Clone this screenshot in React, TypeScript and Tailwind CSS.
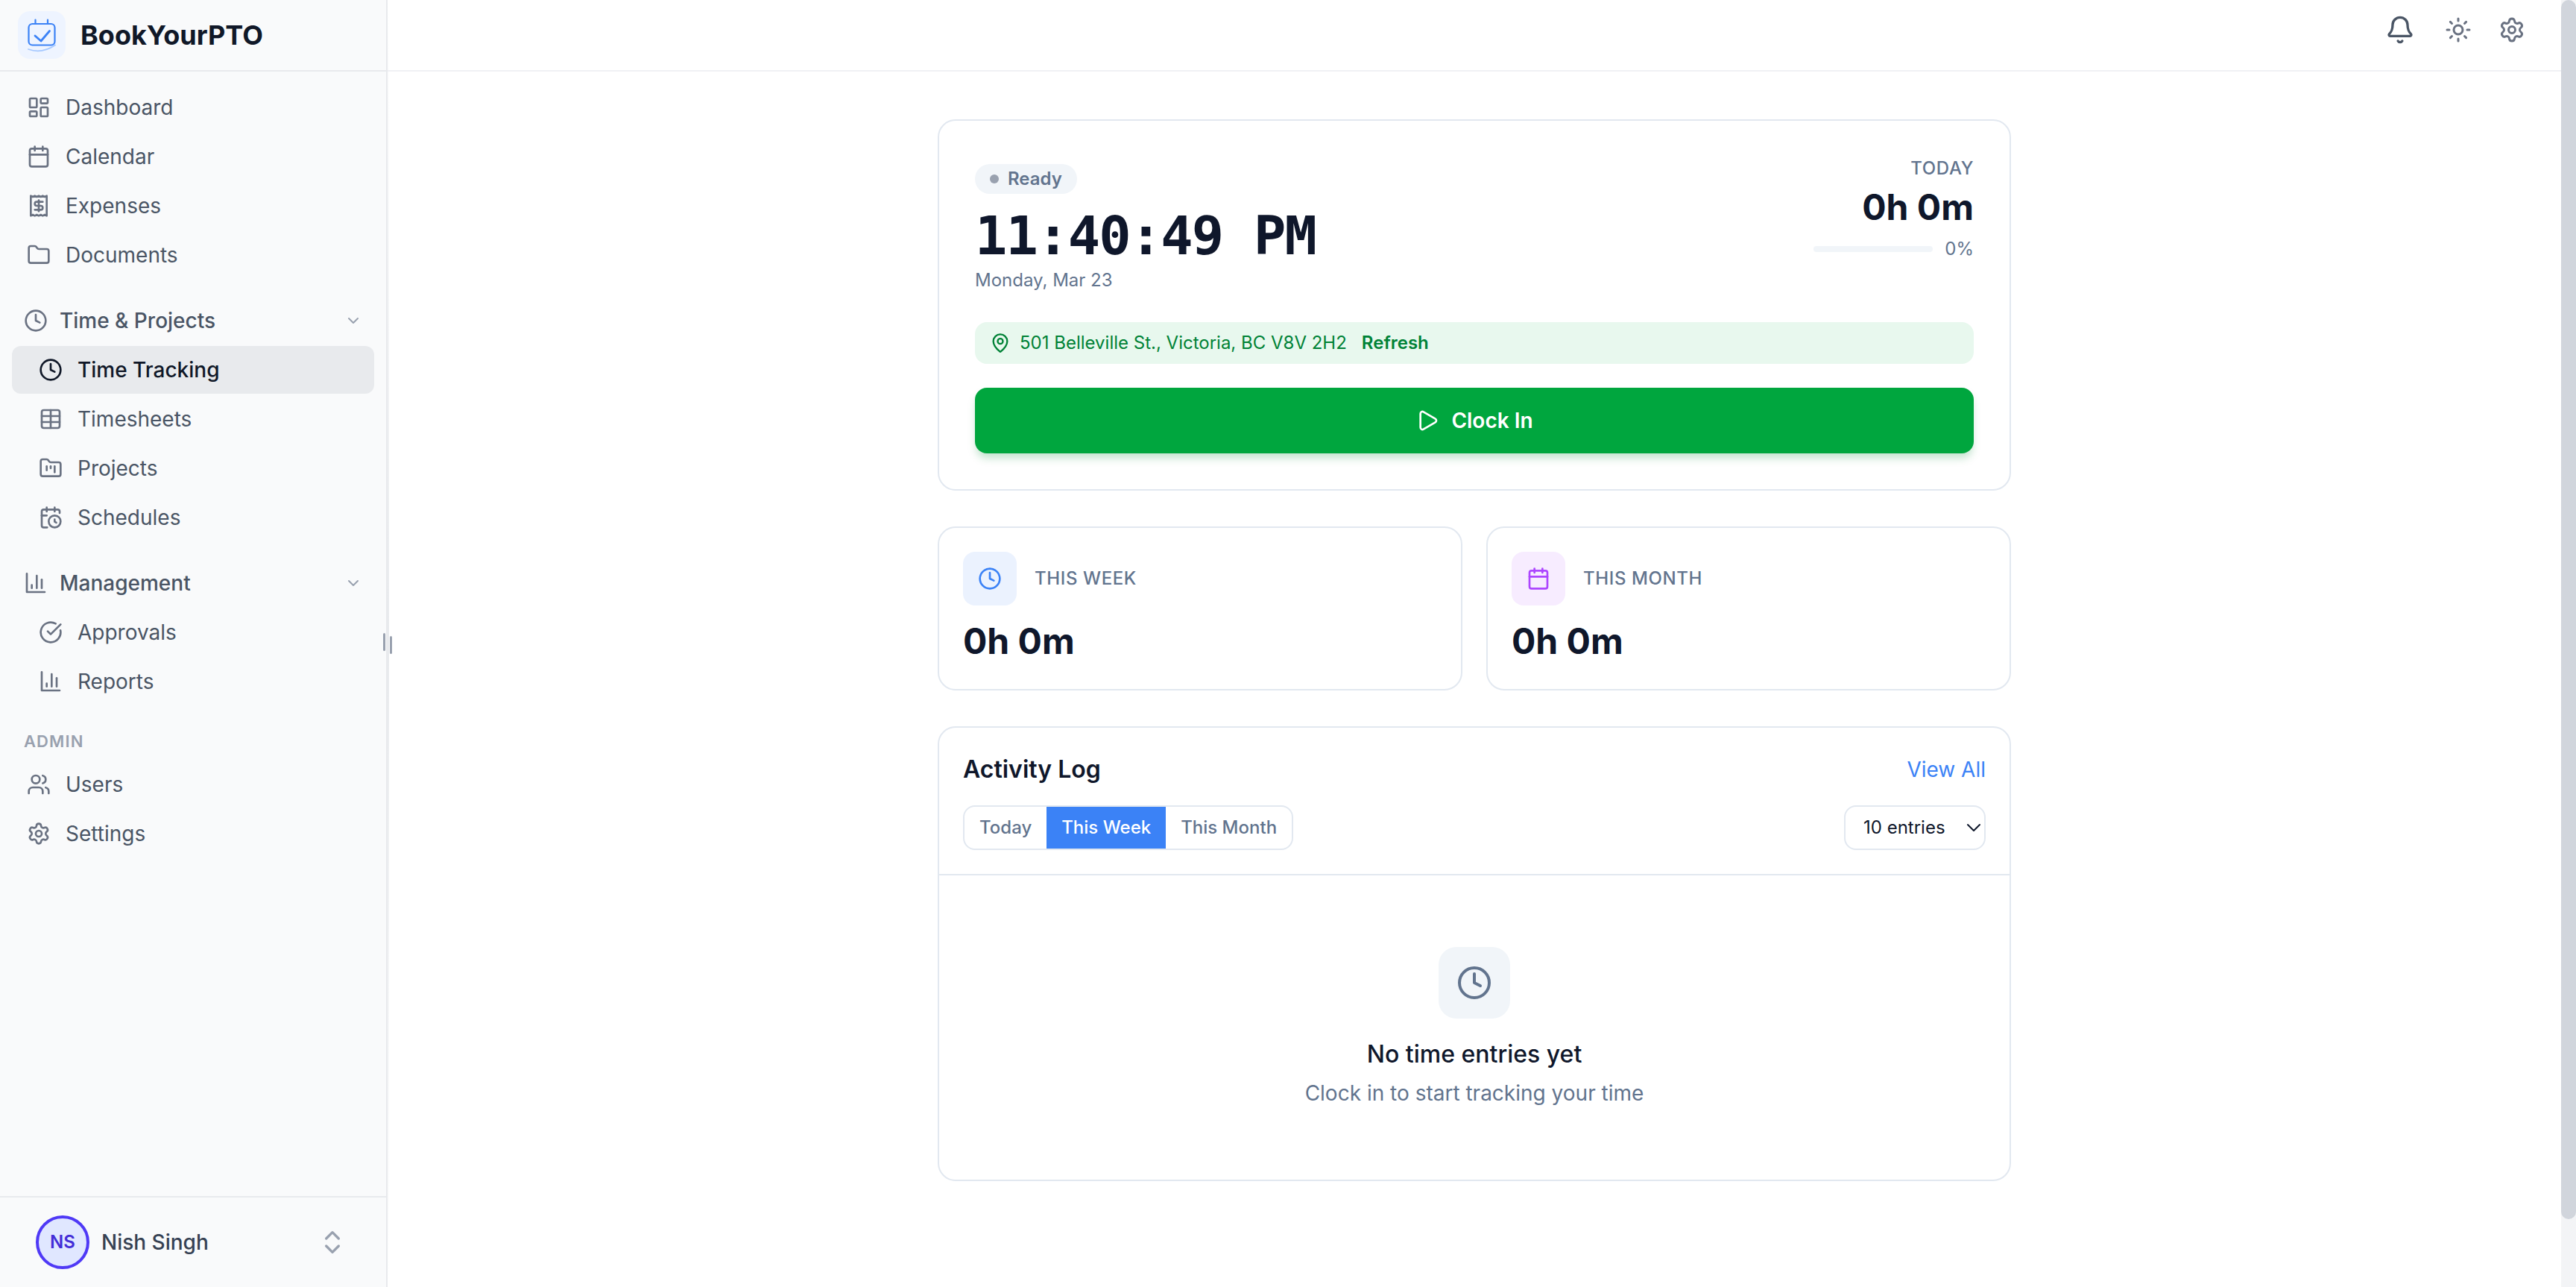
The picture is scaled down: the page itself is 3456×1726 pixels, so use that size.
import React from "react";
import {
  Bell,
  Calendar,
  CalendarClock,
  ChevronDown,
  ChevronsUpDown,
  CircleCheckBig,
  Clock,
  Folder,
  FolderKanban,
  LayoutDashboard,
  MapPin,
  Play,
  Settings,
  Sun,
  Table,
  Users,
} from "lucide-react";

type IconProps = { className?: string; strokeWidth?: number };
type IconType = React.ComponentType<IconProps>;

function BarChartAxes({ className, strokeWidth = 2 }: IconProps) {
  return (
    <svg
      className={className}
      viewBox="0 0 24 24"
      fill="none"
      stroke="currentColor"
      strokeWidth={strokeWidth}
      strokeLinecap="round"
      strokeLinejoin="round"
      aria-hidden="true"
    >
      <path d="M3 2.500v18.500h18" />
      <path d="M8 17v-3" />
      <path d="M13 17V4.500" />
      <path d="M18 17V8.500" />
    </svg>
  );
}

function ReceiptBill({ className, strokeWidth = 2 }: IconProps) {
  return (
    <svg
      className={className}
      viewBox="0 0 24 24"
      fill="none"
      stroke="currentColor"
      strokeWidth={strokeWidth}
      strokeLinecap="round"
      strokeLinejoin="round"
      aria-hidden="true"
    >
      <path d="M4 2v20l2-1 2 1 2-1 2 1 2-1 2 1 2-1 2 1V2l-2 1-2-1-2 1-2-1-2 1-2-1-2 1Z" />
      <path d="M16 8h-6a2 2 0 1 0 0 4h4a2 2 0 1 1 0 4H8" />
      <path d="M12 17.500v-11" />
    </svg>
  );
}

function Logo() {
  return (
    <span className="flex size-16 shrink-0 items-center justify-center rounded-2xl bg-[#eef4ff]">
      <svg className="size-12" viewBox="0 0 48 48" fill="none" strokeLinecap="round" strokeLinejoin="round" aria-hidden="true">
        <rect x="6.5" y="9" width="35" height="28.5" rx="5" stroke="#3b82f6" strokeWidth="2.2" />
        <path d="M15.500 3.500V9M32 3.500V9" stroke="#3b82f6" strokeWidth="2.2" />
        <path d="M15 25l8 7L34.500 18.500" stroke="#3b82f6" strokeWidth="2.8" />
        <path d="M6 43q18 6.500 36-5.500" stroke="#a5c8ff" strokeWidth="1.8" />
      </svg>
    </span>
  );
}

function NavItem({ icon: Icon, label, nested, active }: { icon: IconType; label: string; nested?: boolean; active?: boolean }) {
  return (
    <li>
      <a
        href="#"
        aria-current={active ? "page" : undefined}
        className={`flex h-16 items-center gap-5 rounded-xl pr-5 text-[28px] leading-10 ${nested ? "pl-9" : "pl-5"} ${
          active ? "bg-[#e8eaed] font-medium text-[#101828]" : "text-[#4a5565]"
        }`}
      >
        <Icon className={`size-8 shrink-0 ${active ? "text-[#101828]" : "text-[#6a7282]"}`} strokeWidth={2} />
        {label}
      </a>
    </li>
  );
}

function NavGroup({ icon: Icon, label, children }: { icon: IconType; label: string; children: React.ReactNode }) {
  return (
    <section className="flex flex-col gap-0.5">
      <button type="button" aria-expanded="true" className="flex h-16 w-full items-center gap-4 px-4 text-[28px] leading-10 font-medium text-[#4a5565]">
        <Icon className="size-8 shrink-0 text-[#6a7282]" strokeWidth={2} />
        <span className="flex-1 text-left">{label}</span>
        <ChevronDown className="size-6 text-[#99a1af]" strokeWidth={2} />
      </button>
      <ul className="flex flex-col gap-0.5">{children}</ul>
    </section>
  );
}

function Sidebar() {
  return (
    <aside className="relative flex w-[520px] shrink-0 flex-col border-r-2 border-[#e8eaed] bg-[#f9fafb]">
      <div className="flex h-24 shrink-0 items-center gap-5 border-b-2 border-[#e8eaed] px-6">
        <Logo />
        <span className="text-4xl font-bold text-[#101828]">BookYourPTO</span>
      </div>

      <nav aria-label="Main" className="flex flex-1 flex-col gap-6 px-4 pt-4">
        <ul className="flex flex-col gap-0.5">
          <NavItem icon={LayoutDashboard} label="Dashboard" />
          <NavItem icon={Calendar} label="Calendar" />
          <NavItem icon={ReceiptBill} label="Expenses" />
          <NavItem icon={Folder} label="Documents" />
        </ul>
        <NavGroup icon={Clock} label="Time &amp; Projects">
          <NavItem icon={Clock} label="Time Tracking" nested active />
          <NavItem icon={Table} label="Timesheets" nested />
          <NavItem icon={FolderKanban} label="Projects" nested />
          <NavItem icon={CalendarClock} label="Schedules" nested />
        </NavGroup>
        <NavGroup icon={BarChartAxes} label="Management">
          <NavItem icon={CircleCheckBig} label="Approvals" nested />
          <NavItem icon={BarChartAxes} label="Reports" nested />
        </NavGroup>
        <section className="flex flex-col gap-0.5">
          <h2 className="px-4 py-2 text-[22px] leading-8 font-semibold tracking-wider text-[#99a1af]">ADMIN</h2>
          <ul className="flex flex-col gap-0.5">
            <NavItem icon={Users} label="Users" />
            <NavItem icon={Settings} label="Settings" />
          </ul>
        </section>
      </nav>

      <button type="button" className="flex items-center gap-4 border-t-2 border-[#e8eaed] py-6 pr-[52px] pl-12">
        <span className="flex size-18 items-center justify-center rounded-full border-4 border-[#4f39f6] bg-[#e0e7ff] text-2xl font-semibold text-[#432dd7]">
          NS
        </span>
        <span className="flex-1 text-left text-[28px] leading-10 font-medium text-[#364153]">Nish Singh</span>
        <ChevronsUpDown className="size-10 text-[#99a1af]" strokeWidth={2} />
      </button>

      <div className="absolute inset-y-0 -right-1 w-0.5 bg-linear-to-b from-transparent via-[#e8eaed] to-transparent" />
      <div role="separator" aria-label="Resize sidebar" className="absolute top-1/2 -right-2 z-10 flex -translate-y-1/2 gap-1.5">
        <span className="mb-1 h-6 w-[3px] rounded-full bg-[#99a1af]" />
        <span className="mt-1 h-6 w-[3px] rounded-full bg-[#99a1af]" />
      </div>
    </aside>
  );
}

function TopBar() {
  return (
    <header className="flex h-24 shrink-0 items-start justify-end gap-5 border-b-2 border-[#f0f1f5] px-10 pt-3">
      <button type="button" aria-label="Notifications" className="mr-1 p-2 text-[#4a5565]">
        <Bell className="size-10" strokeWidth={2} />
      </button>
      <button type="button" aria-label="Toggle theme" className="px-2 py-2.5 text-[#6a7282]">
        <Sun className="size-9" strokeWidth={2} />
      </button>
      <button type="button" aria-label="Settings" className="px-2 py-2.5 text-[#6a7282]">
        <Settings className="size-9" strokeWidth={2} />
      </button>
    </header>
  );
}

const card = "rounded-3xl border-2 border-[#e2e8f0] bg-white";

function ClockCard() {
  return (
    <section className={`${card} p-12`}>
      <div className="flex items-start justify-between">
        <div className="flex flex-col items-start pt-2.5">
          <span className="flex h-10 items-center gap-3 rounded-full bg-[#f1f5f9] px-5 text-2xl font-semibold text-[#62748e]">
            <span className="size-3 rounded-full bg-[#99a1af]" />
            Ready
          </span>
          <time className="mt-4 font-['DejaVu_Sans_Mono',monospace] text-7xl leading-20 font-bold tracking-tight text-[#0f172b]">
            11:40:49 PM
          </time>
          <p className="mt-1 text-2xl text-[#62748e]">Monday, Mar 23</p>
        </div>
        <div className="flex flex-col items-end">
          <h2 className="text-2xl font-medium tracking-wide text-[#62748e]">TODAY</h2>
          <p className="mt-1 text-5xl leading-16 font-bold text-[#0f172b]">0h 0m</p>
          <div className="mt-2 flex items-center gap-4">
            <div role="progressbar" aria-label="Hours today" aria-valuenow={0} className="h-2 w-40 rounded-full bg-[#f1f5f9]" />
            <span className="text-2xl text-[#62748e]">0%</span>
          </div>
        </div>
      </div>

      <div className="mt-10 flex h-14 items-center gap-3 rounded-2xl bg-[#e8f8ee] px-5 text-2xl text-[#008236]">
        <MapPin className="size-7" strokeWidth={2} />
        <span>501 Belleville St., Victoria, BC V8V 2H2</span>
        <button type="button" className="ml-2 font-semibold">
          Refresh
        </button>
      </div>

      <button
        type="button"
        className="mt-8 flex h-22 w-full items-center justify-center gap-4 rounded-2xl bg-[#00a63e] text-[28px] leading-10 font-semibold text-white shadow-[0_8px_12px_-2px_rgba(0,140,50,0.25)]"
      >
        <Play className="size-8" strokeWidth={2} />
        Clock In
      </button>
    </section>
  );
}

function StatCard({ icon: Icon, label, tone }: { icon: IconType; label: string; tone: string }) {
  return (
    <section className={`${card} p-8`}>
      <div className="flex items-center gap-6">
        <span className={`flex size-18 items-center justify-center rounded-2xl ${tone}`}>
          <Icon className="size-8" strokeWidth={2} />
        </span>
        <h2 className="text-2xl font-medium tracking-wide text-[#62748e]">{label}</h2>
      </div>
      <p className="mt-4 text-5xl leading-16 font-bold text-[#0f172b]">0h 0m</p>
    </section>
  );
}

function ActivityLog() {
  const ranges = ["Today", "This Week", "This Month"];
  return (
    <section className={card}>
      <div className="border-b-2 border-[#e2e8f0] p-8">
        <div className="flex items-center justify-between">
          <h2 className="text-[32px] leading-12 font-semibold text-[#0f172b]">Activity Log</h2>
          <a href="#" className="text-[28px] leading-10 text-[#3b82f6]">
            View All
          </a>
        </div>
        <div className="mt-6 flex items-center justify-between">
          <div role="group" aria-label="Range" className="flex h-15 overflow-hidden rounded-2xl border-2 border-[#e2e8f0]">
            {ranges.map((range) => (
              <button
                key={range}
                type="button"
                aria-pressed={range === "This Week"}
                className={`px-5 text-2xl font-medium ${range === "This Week" ? "bg-[#3b82f6] text-white" : "text-[#62748e]"}`}
              >
                {range}
              </button>
            ))}
          </div>
          <div className="relative">
            <select
              aria-label="Entries shown"
              className="h-15 w-[190px] appearance-none rounded-2xl border-2 border-[#e2e8f0] bg-white pl-6 text-2xl text-[#0f172b]"
            >
              <option>10 entries</option>
            </select>
            <ChevronDown className="pointer-events-none absolute top-3.5 right-0 size-8 text-[#0f172b]" strokeWidth={1.5} />
          </div>
        </div>
      </div>
      <div className="flex flex-col items-center py-24">
        <span className="flex size-24 items-center justify-center rounded-3xl bg-[#f1f5f9]">
          <Clock className="size-12 text-[#62748e]" strokeWidth={2} />
        </span>
        <h3 className="mt-6 text-[32px] leading-12 font-medium text-[#0f172b]">No time entries yet</h3>
        <p className="mt-2 text-[28px] leading-10 text-[#62748e]">Clock in to start tracking your time</p>
      </div>
    </section>
  );
}

export default function App() {
  return (
    <div className="flex h-screen overflow-hidden bg-white font-['Inter','Liberation_Sans',sans-serif]">
      <Sidebar />
      <div className="flex min-w-0 flex-1 flex-col">
        <TopBar />
        <main className="mx-auto flex w-full max-w-[1440px] flex-col gap-12 pt-16">
          <ClockCard />
          <div className="grid grid-cols-2 gap-8">
            <StatCard icon={Clock} label="THIS WEEK" tone="bg-[#ebf2fe] text-[#3b82f6]" />
            <StatCard icon={Calendar} label="THIS MONTH" tone="bg-[#f7ecff] text-[#ad46ff]" />
          </div>
          <ActivityLog />
        </main>
      </div>
      <div className="w-5 shrink-0 bg-[#f3f4f6]">
        <div className="h-[94.7%] rounded-full bg-[#d1d5dc]" />
      </div>
    </div>
  );
}
